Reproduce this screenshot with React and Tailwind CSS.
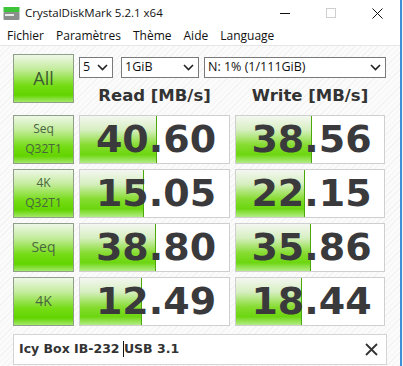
import { useState } from "react";

const rows = [
  { label: ["Seq", "Q32T1"], read: "40.60", readBar: 77, write: "38.56", writeBar: 76 },
  { label: ["4K", "Q32T1"], read: "15.05", readBar: 64, write: "22.15", writeBar: 69 },
  { label: ["Seq"], read: "38.80", readBar: 76, write: "35.86", writeBar: 75 },
  { label: ["4K"], read: "12.49", readBar: 62, write: "18.44", writeBar: 66 },
];

const greenBtn =
  "border border-[#8f9f88] bg-[linear-gradient(to_bottom,#eef7e8_0%,#c4ec9c_30%,#74dc14_65%,#62d400_85%,#a4e86a_100%)]";

function Chevron() {
  return (
    <svg width="11" height="7" viewBox="0 0 11 7" className="shrink-0">
      <path d="M1 1 L5.5 5.5 L10 1" fill="none" stroke="#222" strokeWidth="1.6" />
    </svg>
  );
}

function Select({ width, value }) {
  return (
    <div
      className={`flex h-[21px] items-center justify-between border border-[#7a7a7a] bg-white pl-[3px] pr-[4px] text-[12.5px] text-[#111] ${width}`}
    >
      <span>{value}</span>
      <Chevron />
    </div>
  );
}

function ValueBox({ value, bar, width }) {
  return (
    <div className={`relative h-[49px] border border-[#cfcfcf] bg-white ${width}`}>
      <div
        className="absolute left-0 top-0 h-full border-r border-[#4aa80a] bg-[linear-gradient(to_bottom,#f4f7f1_0%,#d6efc0_30%,#86dc30_62%,#6cd610_82%,#b4ec86_100%)]"
        style={{ width: bar }}
      />
      <div className="relative flex h-full items-center justify-center pl-[3px] font-['DejaVu_Sans',sans-serif] text-[38px] font-bold leading-none text-[#3a3a3c]">
        {value}
      </div>
    </div>
  );
}

function AppIcon() {
  return (
    <svg width="17" height="15" viewBox="0 0 17 15">
      <rect x="0.5" y="1" width="16" height="5" fill="#3ec43a" />
      <rect x="0.5" y="6" width="16" height="8" rx="1" fill="#8a8f8c" />
      <rect x="2" y="8" width="9" height="2" fill="#e8ece9" />
    </svg>
  );
}

export default function App() {
  const [device] = useState("Icy Box IB-232 ");

  return (
    <div className="flex h-[366px] w-[403px] overflow-hidden bg-white font-['Open_Sans',sans-serif]">
      <div className="flex w-[400px] flex-col">
        {/* Title bar */}
        <div className="flex h-[26px] items-center bg-white">
          <div className="ml-[3px]">
            <AppIcon />
          </div>
          <span className="ml-[5px] text-[11.5px] text-[#111]">CrystalDiskMark 5.2.1 x64</span>
          <div className="ml-auto flex items-center">
            <div className="flex w-[46px] justify-center">
              <div className="h-px w-[10px] bg-[#111]" />
            </div>
            <div className="flex w-[46px] justify-center">
              <div className="h-[10px] w-[10px] border border-[#cfcfcf]" />
            </div>
            <div className="flex w-[46px] justify-center">
              <svg width="11" height="11" viewBox="0 0 11 11">
                <path d="M0.5 0.5 L10.5 10.5 M10.5 0.5 L0.5 10.5" stroke="#111" strokeWidth="1" />
              </svg>
            </div>
          </div>
        </div>

        {/* Menu bar */}
        <div className="flex h-[19px] items-center gap-[12px] bg-white pl-[7px] text-[12px] text-[#111]">
          <span>Fichier</span>
          <span>Paramètres</span>
          <span>Thème</span>
          <span>Aide</span>
          <span>Language</span>
        </div>

        {/* Content */}
        <div className="flex-1 border-t border-[#e6e6e6] bg-[#fafafa] bg-[repeating-linear-gradient(135deg,#fbfbfb_0px,#fbfbfb_3px,#f3f3f3_3px,#f3f3f3_4px)] pl-[13px] pt-[8px]">
          <div className="flex gap-[5px]">
            <div
              className={`flex h-[49px] w-[61px] items-center justify-center text-[18px] text-[#3d5a30] ${greenBtn}`}
            >
              All
            </div>
            <div className="flex flex-col">
              <div className="mt-[3px] flex">
                <Select width="w-[34px]" value="5" />
                <Select width="ml-[8px] w-[78px]" value="1GiB" />
                <Select width="ml-[5px] w-[182px]" value="N: 1% (1/111GiB)" />
              </div>
              <div className="mt-[6px] flex font-['DejaVu_Sans',sans-serif] text-[16.5px] font-bold text-[#333]">
                <div className="w-[151px] text-center">Read [MB/s]</div>
                <div className="ml-[5px] w-[150px] text-center">Write [MB/s]</div>
              </div>
            </div>
          </div>

          <div className="mt-[6px] flex flex-col gap-[5px]">
            {rows.map((r, i) => (
              <div key={i} className="flex gap-[5px]">
                <div
                  className={`flex h-[49px] w-[61px] flex-col items-center justify-center leading-[20px] text-[#4a6640] ${
                    r.label.length > 1 ? "text-[12px]" : "text-[14px]"
                  } ${greenBtn}`}
                >
                  {r.label.map((l) => (
                    <span key={l}>{l}</span>
                  ))}
                </div>
                <ValueBox value={r.read} bar={r.readBar} width="w-[151px]" />
                <ValueBox value={r.write} bar={r.writeBar} width="w-[150px]" />
              </div>
            ))}
          </div>

          <div className="mt-[8px] flex h-[31px] w-[374px] items-center border border-[#d4d4d4] bg-white pl-[5px] pr-[8px]">
            <span className="whitespace-pre font-['DejaVu_Sans',sans-serif] text-[12.5px] font-bold text-[#333]">
              {device}
            </span>
            <span className="-ml-[1px] h-[16px] w-px bg-[#111]" />
            <span className="font-['DejaVu_Sans',sans-serif] text-[12.5px] font-bold text-[#333]">USB 3.1</span>
            <svg className="ml-auto" width="13" height="13" viewBox="0 0 13 13">
              <path d="M1 1 L12 12 M12 1 L1 12" stroke="#333" strokeWidth="1.8" />
            </svg>
          </div>
        </div>
      </div>
      <div className="w-[2px] bg-[#3d8fd8]" />
      <div className="w-px bg-[#f2f2f2]" />
    </div>
  );
}
